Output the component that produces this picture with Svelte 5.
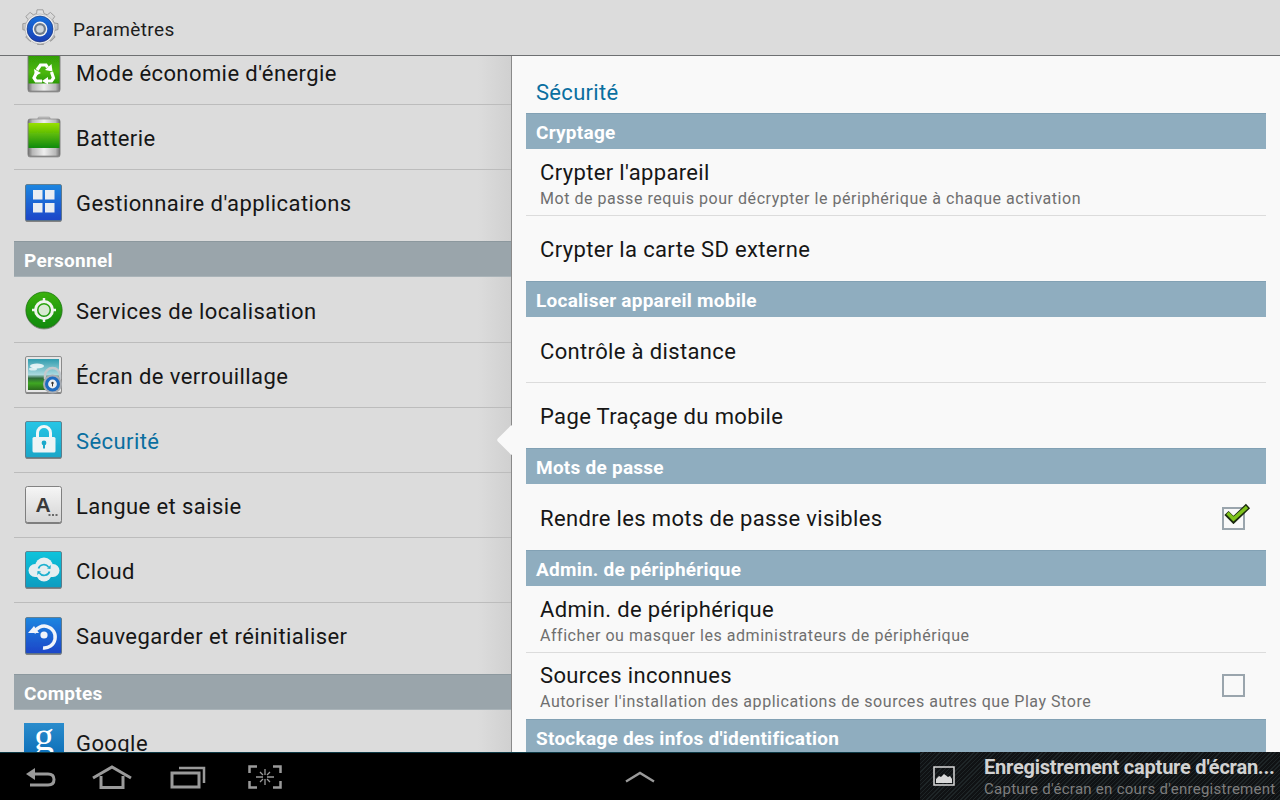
<script>
  const leftGroups = [
    { items: [{ t: "Mode économie d'énergie", i: 'eco' }, { t: 'Batterie', i: 'battery' }, { t: "Gestionnaire d'applications", i: 'apps' }] },
    { title: 'Personnel', items: [
      { t: 'Services de localisation', i: 'loc' }, { t: 'Écran de verrouillage', i: 'lock' },
      { t: 'Sécurité', i: 'sec', active: true }, { t: 'Langue et saisie', i: 'lang' },
      { t: 'Cloud', i: 'cloud' }, { t: 'Sauvegarder et réinitialiser', i: 'backup' }] },
    { title: 'Comptes', items: [{ t: 'Google', i: 'google' }] }
  ];
  const rightGroups = [
    { title: 'Cryptage', items: [
      { t: "Crypter l'appareil", s: 'Mot de passe requis pour décrypter le périphérique à chaque activation' },
      { t: 'Crypter la carte SD externe' }] },
    { title: 'Localiser appareil mobile', items: [{ t: 'Contrôle à distance' }, { t: 'Page Traçage du mobile' }] },
    { title: 'Mots de passe', items: [{ t: 'Rendre les mots de passe visibles', c: 'on' }] },
    { title: 'Admin. de périphérique', items: [
      { t: 'Admin. de périphérique', s: 'Afficher ou masquer les administrateurs de périphérique' },
      { t: 'Sources inconnues', s: "Autoriser l'installation des applications de sources autres que Play Store", c: 'off' }] },
    { title: "Stockage des infos d'identification", items: [] }
  ];
</script>

<svg class="defs" width="0" height="0" aria-hidden="true">
  <defs>
    <linearGradient id="gBlue" x1="0" y1="0" x2="0" y2="1"><stop offset="0" stop-color="#1c86e0"/><stop offset="1" stop-color="#1c45c8"/></linearGradient>
    <linearGradient id="gCyan" x1="0" y1="0" x2="0" y2="1"><stop offset="0" stop-color="#27c6e6"/><stop offset="1" stop-color="#1ba6c8"/></linearGradient>
    <linearGradient id="gCloud" x1="0" y1="0" x2="0" y2="1"><stop offset="0" stop-color="#10c4dc"/><stop offset="1" stop-color="#0a9cc0"/></linearGradient>
    <linearGradient id="gBat" x1="0" y1="0" x2="0" y2="1"><stop offset="0" stop-color="#98e000"/><stop offset="1" stop-color="#0f8a10"/></linearGradient>
    <linearGradient id="gEco" x1="0" y1="0" x2="0" y2="1"><stop offset="0" stop-color="#2f9a06"/><stop offset=".6" stop-color="#4cb808"/><stop offset="1" stop-color="#2a9a06"/></linearGradient>
    <linearGradient id="gMetal" x1="0" y1="0" x2="1" y2="0"><stop offset="0" stop-color="#6f6f6f"/><stop offset=".14" stop-color="#b8b8b8"/><stop offset=".5" stop-color="#efefef"/><stop offset=".86" stop-color="#b8b8b8"/><stop offset="1" stop-color="#6f6f6f"/></linearGradient>
    <linearGradient id="gLoc" x1="0" y1="0" x2="0" y2="1"><stop offset="0" stop-color="#3bb10e"/><stop offset="1" stop-color="#0f8a08"/></linearGradient>
    <linearGradient id="gKey" x1="0" y1="0" x2="0" y2="1"><stop offset="0" stop-color="#f6f6f6"/><stop offset="1" stop-color="#d4d4d4"/></linearGradient>
    <linearGradient id="gSky" x1="0" y1="0" x2="0" y2="1"><stop offset="0" stop-color="#2f9cae"/><stop offset=".5" stop-color="#a9d8de"/><stop offset=".62" stop-color="#2f6a3a"/><stop offset=".78" stop-color="#3fa822"/><stop offset="1" stop-color="#2a6a1c"/></linearGradient>
    <linearGradient id="gGoogle" x1="0" y1="0" x2="0" y2="1"><stop offset="0" stop-color="#2a8ccc"/><stop offset="1" stop-color="#0668b4"/></linearGradient>
    <linearGradient id="gRing" x1="0" y1="0" x2="0" y2="1"><stop offset="0" stop-color="#1670dc"/><stop offset="1" stop-color="#1a3fb4"/></linearGradient>
    <linearGradient id="gSilver" x1="0" y1="0" x2="0" y2="1"><stop offset="0" stop-color="#e4e4e4"/><stop offset="1" stop-color="#a8a8a8"/></linearGradient>
    <filter id="drop" x="-10%" y="-10%" width="120%" height="125%"><feDropShadow dx="0" dy="1" stdDeviation=".6" flood-color="#000" flood-opacity=".45"/></filter>
  </defs>
</svg>

{#snippet tile(fill)}
  <rect x="1.5" y="1.5" width="36" height="36" rx="1.5" fill={fill} stroke="#5d7480" stroke-width=".8" filter="url(#drop)"/>
{/snippet}

{#snippet icon(name)}
  <svg class="icon" viewBox="0 0 40 40" width="40" height="40" aria-hidden="true">
    {#if name === 'eco'}
      <g filter="url(#drop)">
        <rect x="4" y="2" width="32" height="37" rx="2" fill="url(#gMetal)" stroke="#777" stroke-width=".6"/>
        <rect x="4.5" y="2" width="31" height="29.500" fill="url(#gEco)"/>
      </g>
      <g fill="none" stroke="#fff" stroke-width="3.200">
        <path d="M13 18l3.500-5h5.500l1.500 2.500"/><path d="M12.500 21l-2.500 5 2 3h6"/><path d="M27.500 20l2 6-2 3h-4"/>
      </g>
      <g fill="#fff"><path d="M21 18l7.500 1.500-1-7.500z"/><path d="M10 17l7 4-6 3z"/><path d="M24 25v7.500l-6-3.500z"/></g>
    {:else if name === 'battery'}
      <g filter="url(#drop)">
        <rect x="14" y="0" width="12" height="3" rx="1" fill="#bdbdbd" stroke="#999" stroke-width=".5"/>
        <rect x="4" y="2" width="32" height="37" rx="2" fill="url(#gMetal)" stroke="#777" stroke-width=".6"/>
        <rect x="4.500" y="6" width="31" height="25" fill="url(#gBat)"/>
      </g>
    {:else if name === 'apps'}
      {@render tile('url(#gBlue)')}
      <g fill="#e9edf2"><rect x="9" y="7" width="9.5" height="9.5"/><rect x="21" y="7" width="9.5" height="9.5"/><rect x="9" y="20" width="9.5" height="9.5"/><rect x="21" y="20" width="9.5" height="9.5"/></g>
    {:else if name === 'loc'}
      <circle cx="20" cy="20" r="18" fill="url(#gLoc)" stroke="#1d7a10" stroke-width=".8" filter="url(#drop)"/>
      <circle cx="20" cy="20" r="8.5" fill="none" stroke="#f0f4ee" stroke-width="3"/>
      <circle cx="20" cy="20" r="5.5" fill="#d9ead2"/>
      <path d="M20 8v5M20 27v5M8 20h5M27 20h5" stroke="#f0f4ee" stroke-width="2.4"/>
    {:else if name === 'lock'}
      <rect x="1.5" y="1.5" width="36" height="36" rx="1.5" fill="#e6e6e6" stroke="#7c7c7c" stroke-width=".8" filter="url(#drop)"/>
      <rect x="4" y="4" width="31" height="31" fill="url(#gSky)"/>
      <ellipse cx="13" cy="11" rx="7" ry="2.500" fill="#fff" opacity=".8"/>
      <ellipse cx="9" cy="14" rx="4" ry="1.500" fill="#fff" opacity=".7"/>
      <path d="M21 24v-4a7.500 7 0 0 1 15 0v4" fill="none" stroke="#c4c8cc" stroke-width="2.4"/>
      <circle cx="28.500" cy="29" r="9.500" fill="#a9adb3"/>
      <circle cx="28.500" cy="29" r="7.500" fill="#1f6cc0"/>
      <circle cx="28.500" cy="29" r="4.400" fill="#eef0f2"/>
      <circle cx="28.500" cy="28" r="1.200" fill="#333"/>
      <rect x="28" y="28" width="1" height="3.400" fill="#333"/>
    {:else if name === 'sec'}
      {@render tile('url(#gCyan)')}
      <path d="M13.5 18v-5a6.5 6.5 0 0 1 13 0v5" fill="none" stroke="#f2f7f8" stroke-width="3"/>
      <rect x="8.5" y="17" width="23" height="15.5" rx="1.5" fill="#eef4f5"/>
      <circle cx="20" cy="23" r="2.4" fill="#1ba9ca"/>
      <rect x="19" y="23" width="2" height="5.5" fill="#1ba9ca"/>
    {:else if name === 'lang'}
      <rect x="1.5" y="1.5" width="36" height="36" rx="2" fill="url(#gKey)" stroke="#777" stroke-width=".9" filter="url(#drop)"/>
      <text x="19" y="27" text-anchor="middle" class="keyA">A</text>
      <path d="M24.5 30h2M28 30h2M31.500 30h2" stroke="#444" stroke-width="1.600"/>
    {:else if name === 'cloud'}
      {@render tile('url(#gCloud)')}
      <g fill="#e6eef0">
        <circle cx="20" cy="16.500" r="9"/><circle cx="11" cy="20.500" r="6.500"/><circle cx="29" cy="20.500" r="6.500"/>
        <rect x="11" y="18" width="18" height="9"/><circle cx="20" cy="24" r="7.500"/>
      </g>
      <path d="M14.500 18.500a5.500 5 0 0 1 10-1.500M25.500 21.500a5.500 5 0 0 1-10 1.500" fill="none" stroke="#1db0cf" stroke-width="1.700"/>
      <path d="M23 18.500l3.500.5.300-4zM17 21.500l-3.500-.5-.3 4z" fill="#1db0cf"/>
    {:else if name === 'backup'}
      {@render tile('url(#gBlue)')}
      <path d="M10 17a11 11 0 1 1 9 15" fill="none" stroke="#f1f4fa" stroke-width="3.400"/>
      <path d="M4 17h11l-5-7z" fill="#f1f4fa"/>
      <circle cx="20" cy="19" r="3.600" fill="#f1f4fa"/>
    {:else if name === 'google'}
      <rect x="0" y="0" width="40" height="40" fill="url(#gGoogle)"/>
      <text x="20" y="27" text-anchor="middle" class="gLetter">g</text>
    {/if}
  </svg>
{/snippet}

<div class="screen">
  <header class="top">
    <svg class="gear" viewBox="0 0 40 40" width="40" height="40" aria-hidden="true">
      <path d="M17 .8h6l1 3.800 3.400 1.200 3-2.400 4.400 4-2.200 3.200 1.500 3.300 3.900.7v6l-3.900.9-1.300 3.300 2.300 3.200-4.200 4.300-3.200-2.300-3.400 1.500-.8 3.900h-6l-.9-3.900-3.300-1.400-3.200 2.300-4.300-4.300 2.300-3.100-1.400-3.400-3.900-.9v-6l3.900-.7 1.400-3.400-2.300-3.100 4.300-4.100 3.200 2.400 3.300-1.300z" fill="url(#gSilver)" stroke="#8f8f8f" stroke-width=".8"/>
      <circle cx="20" cy="20" r="15" fill="#f0f0f0" stroke="#a8a8a8" stroke-width=".6"/>
      <circle cx="20" cy="20" r="13" fill="url(#gRing)" stroke="#1a2f70" stroke-width=".6"/>
      <circle cx="20" cy="20" r="7.400" fill="#f2f2f2"/>
      <circle cx="20" cy="20" r="6" fill="#6f7c8c"/>
      <circle cx="20" cy="20" r="3.800" fill="#cfd6dc"/>
    </svg>
    <span class="apptitle">Paramètres</span>
  </header>

  <main class="main">
    <nav class="left">
      <div class="leftlist">
        {#each leftGroups as g}
          {#if g.title}<div class="lsec">{g.title}</div>{/if}
          {#each g.items as it, idx}
            <div class="lrow" class:last={idx === g.items.length - 1} class:first={g.title && idx === 0}>
              <span class="iconbox">{@render icon(it.i)}</span>
              <span class="ltext" class:active={it.active}>{it.t}</span>
            </div>
          {/each}
        {/each}
      </div>
    </nav>
    <section class="right">
      <span class="pointer"></span>
      <h1 class="rtitle">Sécurité</h1>
      {#each rightGroups as g}
        <div class="rsec">{g.title}</div>
        {#each g.items as it, idx}
          <div class="rrow" class:last={idx === g.items.length - 1} class:two={it.s} class:solo={g.items.length === 1}>
            <div class="rbody">
              <div class="rt">{it.t}</div>
              {#if it.s}<div class="rs">{it.s}</div>{/if}
            </div>
            {#if it.c}
              <span class="check">
                {#if it.c === 'on'}
                  <svg class="tick" viewBox="0 0 28 22" width="28" height="22" aria-hidden="true">
                    <path d="M3.500 11l7 7L25 4" fill="none" stroke="#1c2a10" stroke-width="6"/>
                    <path d="M4.500 11l6 6L24 5" fill="none" stroke="#7ec31c" stroke-width="3.500"/>
                  </svg>
                {/if}
              </span>
            {/if}
          </div>
        {/each}
      {/each}
    </section>
  </main>

  <footer class="bar">
    <div class="navzone">
      <div class="navicons">
        <svg viewBox="0 0 32 24" width="32" height="24" aria-hidden="true" class="n1">
          <path d="M6 9h17c4 0 6 2 6 5.500S27 20 23 20H5" fill="none" stroke="#9a9a9a" stroke-width="3"/>
          <path d="M1 9l9-6v12z" fill="#9a9a9a"/>
        </svg>
        <svg viewBox="0 0 40 24" width="40" height="24" aria-hidden="true" class="n2">
          <path d="M1 13L20 2l19 11" fill="none" stroke="#9a9a9a" stroke-width="3"/>
          <path d="M9 11v11.500h22V11" fill="none" stroke="#9a9a9a" stroke-width="3"/>
        </svg>
        <svg viewBox="0 0 36 24" width="36" height="24" aria-hidden="true" class="n3">
          <rect x="2" y="8" width="27" height="14" fill="none" stroke="#9a9a9a" stroke-width="3"/>
          <path d="M9 3h25v15" fill="none" stroke="#9a9a9a" stroke-width="2.500"/>
        </svg>
        <svg viewBox="0 0 34 24" width="34" height="24" aria-hidden="true" class="n4">
          <path d="M9 1.500H1.500V8M25 1.500h7.500V8M9 22.500H1.500V16M25 22.500h7.500V16" fill="none" stroke="#9a9a9a" stroke-width="2.500"/>
          <path d="M17 4v6M17 14v6M8 12h7M19 12h7M12 7l3 3M22 7l-3 3M12 17l3-3M22 17l-3-3" stroke="#9a9a9a" stroke-width="1.300"/>
        </svg>
      </div>
      <svg class="chev" viewBox="0 0 30 12" width="30" height="12" aria-hidden="true">
        <path d="M1 10.500L15 2l14 8.500" fill="none" stroke="#9a9a9a" stroke-width="2.400"/>
      </svg>
    </div>
    <div class="notif">
      <svg class="picicon" viewBox="0 0 22 20" width="22" height="20" aria-hidden="true">
        <rect x="1" y="1" width="20" height="18" fill="none" stroke="#d8d8d8" stroke-width="1.500"/>
        <path d="M3 17v-4l3-3 2 1 3-3 4 3 2-1 2 3v4z" fill="#d8d8d8"/>
      </svg>
      <div class="ntext">
        <div class="ntitle">Enregistrement capture d'écran...</div>
        <div class="nsub">Capture d'écran en cours d'enregistrement</div>
      </div>
    </div>
  </footer>
</div>

<style>
  :global(body) { margin: 0; background: #000; }
  .defs { position: absolute; }
  .screen {
    width: 1280px; height: 800px; display: flex; flex-direction: column; overflow: hidden;
    font-family: Roboto, "Liberation Sans", sans-serif; background: #dcdcdc;
  }
  .top {
    flex: none; display: flex; align-items: center; background: #dcdcdc;
    padding-left: 20px; box-sizing: border-box; border-bottom: 1px solid #6e7072; height: 56px;
    position: relative; z-index: 2;
  }
  .gear { flex: none; margin-top: 2px; }
  .apptitle { margin-left: 13px; font-size: 19px; color: #1c1c1c; letter-spacing: .4px; margin-top: 4px; }
  .main { flex: 1; min-height: 0; display: flex; overflow: hidden; }
  .left {
    width: 512px; flex: none; box-sizing: border-box; padding-left: 14px; overflow: hidden;
    background: linear-gradient(90deg, #dcdcdc 0, #dcdcdc 478px, #d0d0d0 511px);
    border-right: 1px solid #8a8a8a;
  }
  .leftlist { margin-top: -16px; }
  .lsec {
    height: 36px; box-sizing: border-box; background: #9aa5ab; color: #fff; font-weight: 700;
    font-size: 19px; letter-spacing: .25px; padding-left: 10px; line-height: 37px; border-top: 1px solid #8c989e; border-bottom: 1px solid #a9b3b8;
  }
  .lrow {
    height: 65px; box-sizing: border-box; display: flex; align-items: center;
    border-bottom: 1px solid #bcbcbc; padding-top: 3px;
  }
  .lrow.first { height: 66px; }
  .lrow.last { border-bottom: none; margin-bottom: 6px; padding-top: 1px; }
  .iconbox { width: 40px; height: 40px; margin-left: 10px; margin-top: -3px; flex: none; }
  .lrow.last .iconbox { margin-top: -1px; }
  .icon { display: block; overflow: visible; }
  .ltext { margin-left: 12px; font-size: 22px; color: #161616; letter-spacing: .42px; white-space: nowrap; }
  .ltext.active { color: #0a6fa0; }
  .keyA { font: 700 21px "Liberation Sans", sans-serif; fill: #3a3a3a; }
  .gLetter { font: 400 40px "Liberation Serif", serif; fill: #fff; }

  .right { flex: 1; min-width: 0; background: #f9f9f9; padding: 0 14px; position: relative; overflow: visible; }
  .pointer {
    position: absolute; left: -11px; top: 373px; width: 22px; height: 22px; background: #f9f9f9;
    transform: rotate(45deg); border-radius: 2px; z-index: 1;
  }
  .rtitle {
    margin: 0 0 0 10px; height: 57px; line-height: 74px; box-sizing: border-box; font-size: 22px; font-weight: 400; color: #0a6fa0;
    letter-spacing: .3px;
  }
  .rsec {
    height: 36px; box-sizing: border-box; background: #8fadbf; color: #fff; font-weight: 700;
    font-size: 19px; letter-spacing: .25px; padding-left: 10px; line-height: 37px; border-top: 1px solid #82a1b4; position: relative; z-index: 2;
  }
  .rrow {
    height: 66px; box-sizing: border-box; display: flex; align-items: center; padding: 5px 14px 0;
    border-bottom: 1px solid #dcdcdc;
  }
  .rrow.last { border-bottom: none; height: 65px; padding-top: 3px; }
  .rrow.solo { height: 66px; }
  .rrow.two { align-items: flex-start; padding-top: 10px; height: 67px; }
  .rrow.two.last { height: 66px; padding-top: 9px; }
  .rbody { flex: 1; min-width: 0; }
  .rt { font-size: 22px; color: #161616; letter-spacing: .35px; white-space: nowrap; line-height: 28px; }
  .rs { font-size: 16px; color: #6f6f6f; letter-spacing: .54px; white-space: nowrap; line-height: 20px; margin-top: 2px; }
  .check {
    width: 23px; height: 23px; box-sizing: border-box; border: 2px solid #9aa5ad; flex: none; margin-right: 7px; position: relative;
  }
  .rrow.two .check { margin-top: 12px; }
  .tick { position: absolute; left: -1px; top: -7px; }

  .bar { height: 48px; flex: none; display: flex; background: #000; position: relative; z-index: 3; }
  .navzone { width: 920px; flex: none; border-top: 1px solid #0e3a46; box-sizing: border-box; display: flex; position: relative; }
  .navicons { display: flex; align-items: flex-start; padding: 11px 0 0 25px; }
  .navicons svg { display: block; flex: none; }
  .n1 { margin-top: 1px; }
  .n2 { margin-left: 35px; margin-top: 1px; }
  .n3 { margin-left: 38px; margin-top: 1px; }
  .n4 { margin-left: 42px; margin-top: 1px; }
  .chev { margin-left: 343px; margin-top: 18px; display: block; }
  .notif {
    flex: 1; min-width: 0; display: flex; align-items: center;
    background: repeating-linear-gradient(135deg, #101214 0 2px, #1e2527 2px 3px);
  }
  .picicon { margin-left: 13px; flex: none; }
  .ntext { margin-left: 29px; min-width: 0; padding-top: 1px; }
  .ntitle { font-size: 20px; font-weight: 700; color: #d2d2d2; line-height: 24px; white-space: nowrap; letter-spacing: -.22px; }
  .nsub { font-size: 15px; color: #7e7e7e; line-height: 19px; white-space: nowrap; letter-spacing: .27px; margin-top: 1px; }
</style>
